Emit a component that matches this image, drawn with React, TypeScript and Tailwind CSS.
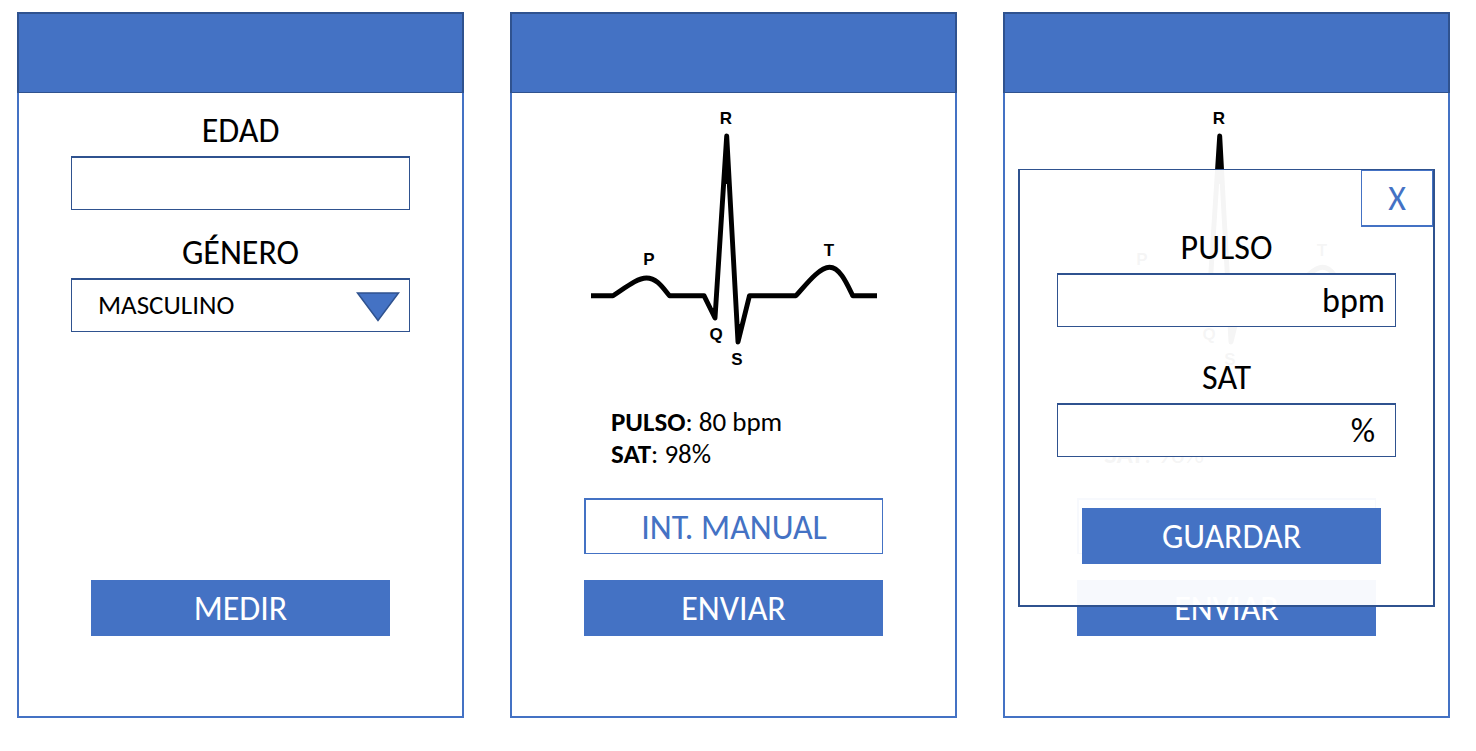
import type { ReactNode } from "react";

function Screen({ children, overlay }: { children: ReactNode; overlay?: ReactNode }) {
  return (
    <section className="relative flex flex-col">
      <header className="h-[81px] border-2 border-b border-[#2f528f] bg-[#4472c4]" />
      <div className="flex flex-1 flex-col items-center border-x-2 border-b-2 border-[#4472c4] pb-20">
        {children}
      </div>
      {overlay}
    </section>
  );
}

const labelClass = "mb-1 text-[34px] leading-[42px]";
const fieldClass =
  "h-[54px] w-full rounded-none border border-t-2 border-[#2f528f] bg-white";
const primaryClass =
  "h-14 w-[299px] max-w-full shrink-0 bg-[#4472c4] pt-[2px] text-[34px] leading-10 text-white";

function PatientForm() {
  return (
    <form className="flex w-full flex-1 flex-col items-center pt-[17px]">
      <div className="flex w-[339px] max-w-full flex-col gap-[22px]">
        <div className="flex flex-col items-center">
          <label htmlFor="edad" className={labelClass}>
            EDAD
          </label>
          <input id="edad" type="text" className={`${fieldClass} px-6 text-[27px]`} />
        </div>
        <div className="flex flex-col items-center">
          <label htmlFor="genero" className={labelClass}>
            GÉNERO
          </label>
          <div className="relative w-full">
            <select
              id="genero"
              className={`${fieldClass} appearance-none pl-[26px] text-[27px]`}
            >
              <option>MASCULINO</option>
              <option>FEMENINO</option>
            </select>
            <svg
              viewBox="0 0 44 30"
              className="pointer-events-none absolute top-[14px] right-[10px] h-[30px] w-11"
              aria-hidden="true"
            >
              <path d="M1.5 1H42.5L22 28.5Z" fill="#4472c4" stroke="#2f528f" strokeWidth="1.5" />
            </svg>
          </div>
        </div>
      </div>
      <button type="button" className={`${primaryClass} mt-auto`}>
        MEDIR
      </button>
    </form>
  );
}

function EcgWave() {
  return (
    <svg viewBox="0 0 286 260" className="h-[260px] w-[286px] max-w-full shrink-0" role="img">
      <path
        d="M0 187.7H22C34 180 46 170 55.5 170C66 170 72 180 78.5 187.7H113L124 210L135.7 28L147 234L158.5 187.7H205C214 178 228 159.3 238.5 159.3C249 159.3 256 176 261.7 187.7H286"
        fill="none"
        stroke="#000"
        strokeWidth="4.9"
        strokeLinejoin="round"
      />
      <path d="M135.7 28L132 76H139.4ZM147 234L146 216H151.5ZM124 210L119 200H125Z" />
      <g
        className="font-['Liberation_Sans',Arial,sans-serif] text-[17px] font-bold"
        textAnchor="middle"
      >
        <text x="58" y="157">P</text>
        <text x="135" y="16">R</text>
        <text x="125" y="232">Q</text>
        <text x="146" y="257">S</text>
        <text x="238" y="148">T</text>
      </g>
    </svg>
  );
}

function Measurement() {
  return (
    <div className="flex w-full flex-1 flex-col items-center pt-[15px]">
      <EcgWave />
      <div className="mt-auto flex w-[299px] max-w-full flex-col">
        <div className="px-[27px] pb-7 text-[27px] leading-8">
          <p>
            <b>PULSO</b>: 80 bpm
          </p>
          <p>
            <b>SAT</b>: 98%
          </p>
        </div>
        <button
          type="button"
          className="mb-[26px] h-14 border border-t-2 border-l-2 border-[#4472c4] bg-white pt-[2px] text-[34px] leading-10 text-[#4472c4]"
        >
          INT. MANUAL
        </button>
        <button type="button" className={primaryClass}>
          ENVIAR
        </button>
      </div>
    </div>
  );
}

function UnitField({
  id,
  label,
  unit,
  inset,
}: {
  id: string;
  label: string;
  unit: string;
  inset: string;
}) {
  return (
    <div className="flex flex-col items-center">
      <label htmlFor={id} className={labelClass}>
        {label}
      </label>
      <div className={`${fieldClass} flex items-center ${inset}`}>
        <input
          id={id}
          type="text"
          className="min-w-0 flex-1 bg-transparent px-3 text-right text-[34px] outline-none"
        />
        <span className="text-[34px] leading-10">{unit}</span>
      </div>
    </div>
  );
}

function ManualEntry() {
  return (
    <div
      role="dialog"
      className="absolute inset-x-[15px] top-[157px] flex flex-col border-2 border-t border-[#2f528f] bg-white/96 pb-[41px]"
    >
      <button
        type="button"
        className="h-[57px] w-[72px] self-end border border-b-2 border-[#4472c4] bg-white pt-[2px] text-[34px] leading-10 text-[#4472c4]"
      >
        X
      </button>
      <div className="flex w-[339px] max-w-full flex-col gap-[30px] self-center">
        <UnitField id="pulso" label="PULSO" unit="bpm" inset="pr-[10px]" />
        <UnitField id="sat" label="SAT" unit="%" inset="pr-5" />
      </div>
      <button type="button" className={`${primaryClass} mt-[51px] mr-[52px] self-end`}>
        GUARDAR
      </button>
    </div>
  );
}

export default function App() {
  return (
    <main className="grid min-h-screen grid-cols-3 gap-[46px] bg-white pt-3 pr-[26px] pb-[33px] pl-[17px] font-[Carlito,Calibri,Lato,sans-serif] text-black">
      <Screen>
        <PatientForm />
      </Screen>
      <Screen>
        <Measurement />
      </Screen>
      <Screen overlay={<ManualEntry />}>
        <Measurement />
      </Screen>
    </main>
  );
}
